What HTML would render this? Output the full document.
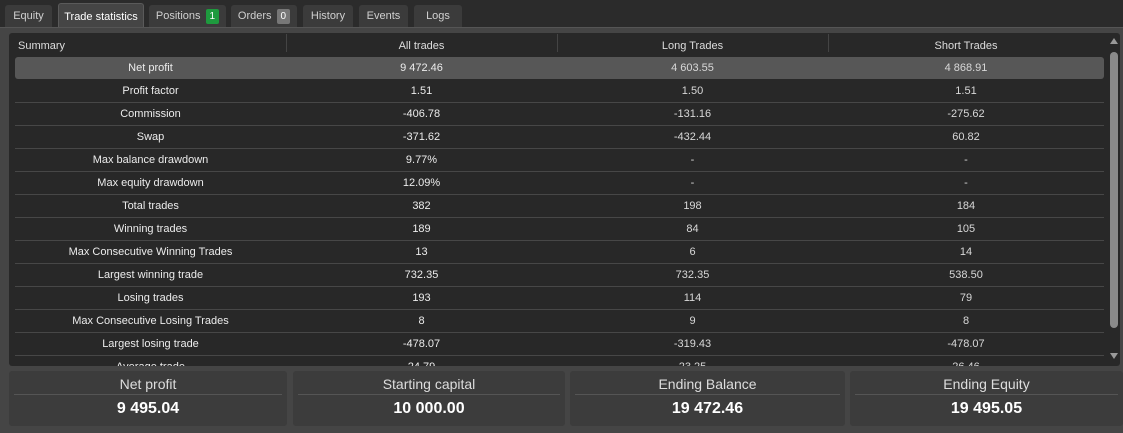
<!DOCTYPE html>
<html><head><style>
body{margin:0;width:1123px;height:432px;background:#2b2b2b;font-family:"Liberation Sans",sans-serif;position:relative;overflow:hidden}
.tab{position:absolute;top:5px;height:22px;background:#3b3b3b;color:#d0d0d0;font-size:11px;line-height:23px;text-align:center;border-radius:3px 3px 0 0}
.tab.a{background:#454545;color:#fff;top:3px;height:25px;line-height:27px;border:1px solid #5a5a5a;border-bottom:none;box-sizing:border-box}
.badge{display:inline-block;padding:0 4px;height:15px;line-height:15px;border-radius:2px;color:#fff;margin-left:5px;font-size:10px}
#panel{position:absolute;left:0;top:27px;width:1123px;height:405px;background:#454545;border-top:1px solid #555}
#tbl{position:absolute;left:9px;top:33px;width:1111px;height:333px;background:#282828;border-radius:3px;overflow:hidden}
.row{position:absolute;left:6px;width:1089px;height:22px;border-bottom:1px solid #474747;font-size:11px;color:#ececec;line-height:23px}
.row div{position:absolute;top:0;text-align:center}
.c0{left:0;width:271px}.c1{left:271px;width:271px}.c2{left:542px;width:271px;color:#d8d8d8}.c3{left:813px;width:276px;color:#d8d8d8}
.hl{background:#575757;border-radius:3px;border-bottom:none}
.hdr{position:absolute;top:1px;left:6px;width:1089px;height:24px;font-size:11px;color:#ddd;line-height:24px}
.hdr div{position:absolute;top:0;text-align:center}
.sep{position:absolute;top:3px;width:1px;height:18px;background:#444}
.card{position:absolute;top:371px;height:55px;background:#3c3c3c;border-radius:3px;text-align:center}
.card .t{font-size:14px;color:#ddd;margin-top:4px;height:18px;line-height:18px;border-bottom:1px solid #555;margin-left:5px;margin-right:5px;padding-bottom:1px}
.card .v{font-size:16px;font-weight:bold;color:#fff;margin-top:5px}
</style></head><body>
<div class="tab" style="left:5px;width:47px">Equity</div>
<div class="tab a" style="left:58px;width:86px">Trade statistics</div>
<div class="tab" style="left:149px;width:77px">Positions<span class="badge" style="background:#1e9a3e">1</span></div>
<div class="tab" style="left:231px;width:66px">Orders<span class="badge" style="background:#777">0</span></div>
<div class="tab" style="left:303px;width:50px">History</div>
<div class="tab" style="left:359px;width:49px">Events</div>
<div class="tab" style="left:414px;width:48px">Logs</div>
<div id="panel"></div>
<div id="tbl">
<div class="hdr"><div style="left:3px;text-align:left">Summary</div><div class="c1" style="left:271px;width:271px">All trades</div><div style="left:542px;width:271px">Long Trades</div><div style="left:813px;width:276px">Short Trades</div>
<div class="sep" style="left:271px"></div><div class="sep" style="left:542px"></div><div class="sep" style="left:813px"></div></div>
<div class="row hl" style="top:24px"><div class="c0">Net profit</div><div class="c1">9 472.46</div><div class="c2">4 603.55</div><div class="c3">4 868.91</div></div>
<div class="row" style="top:47px"><div class="c0">Profit factor</div><div class="c1">1.51</div><div class="c2">1.50</div><div class="c3">1.51</div></div>
<div class="row" style="top:70px"><div class="c0">Commission</div><div class="c1">-406.78</div><div class="c2">-131.16</div><div class="c3">-275.62</div></div>
<div class="row" style="top:93px"><div class="c0">Swap</div><div class="c1">-371.62</div><div class="c2">-432.44</div><div class="c3">60.82</div></div>
<div class="row" style="top:116px"><div class="c0">Max balance drawdown</div><div class="c1">9.77%</div><div class="c2">-</div><div class="c3">-</div></div>
<div class="row" style="top:139px"><div class="c0">Max equity drawdown</div><div class="c1">12.09%</div><div class="c2">-</div><div class="c3">-</div></div>
<div class="row" style="top:162px"><div class="c0">Total trades</div><div class="c1">382</div><div class="c2">198</div><div class="c3">184</div></div>
<div class="row" style="top:185px"><div class="c0">Winning trades</div><div class="c1">189</div><div class="c2">84</div><div class="c3">105</div></div>
<div class="row" style="top:208px"><div class="c0">Max Consecutive Winning Trades</div><div class="c1">13</div><div class="c2">6</div><div class="c3">14</div></div>
<div class="row" style="top:231px"><div class="c0">Largest winning trade</div><div class="c1">732.35</div><div class="c2">732.35</div><div class="c3">538.50</div></div>
<div class="row" style="top:254px"><div class="c0">Losing trades</div><div class="c1">193</div><div class="c2">114</div><div class="c3">79</div></div>
<div class="row" style="top:277px"><div class="c0">Max Consecutive Losing Trades</div><div class="c1">8</div><div class="c2">9</div><div class="c3">8</div></div>
<div class="row" style="top:300px"><div class="c0">Largest losing trade</div><div class="c1">-478.07</div><div class="c2">-319.43</div><div class="c3">-478.07</div></div>
<div class="row" style="top:323px"><div class="c0">Average trade</div><div class="c1">24.79</div><div class="c2">23.25</div><div class="c3">26.46</div></div>
<div style="position:absolute;left:1101px;top:5px;width:0;height:0;border-left:4px solid transparent;border-right:4px solid transparent;border-bottom:6px solid #999"></div>
<div style="position:absolute;left:1101px;top:19px;width:8px;height:276px;background:#8a8a8a;border-radius:4px"></div>
<div style="position:absolute;left:1101px;top:320px;width:0;height:0;border-left:4px solid transparent;border-right:4px solid transparent;border-top:6px solid #999"></div>
</div>
<div class="card" style="left:9px;width:278px"><div class="t">Net profit</div><div class="v">9 495.04</div></div>
<div class="card" style="left:293px;width:272px"><div class="t">Starting capital</div><div class="v">10 000.00</div></div>
<div class="card" style="left:570px;width:275px"><div class="t">Ending Balance</div><div class="v">19 472.46</div></div>
<div class="card" style="left:850px;width:273px"><div class="t">Ending Equity</div><div class="v">19 495.05</div></div>
</body></html>
